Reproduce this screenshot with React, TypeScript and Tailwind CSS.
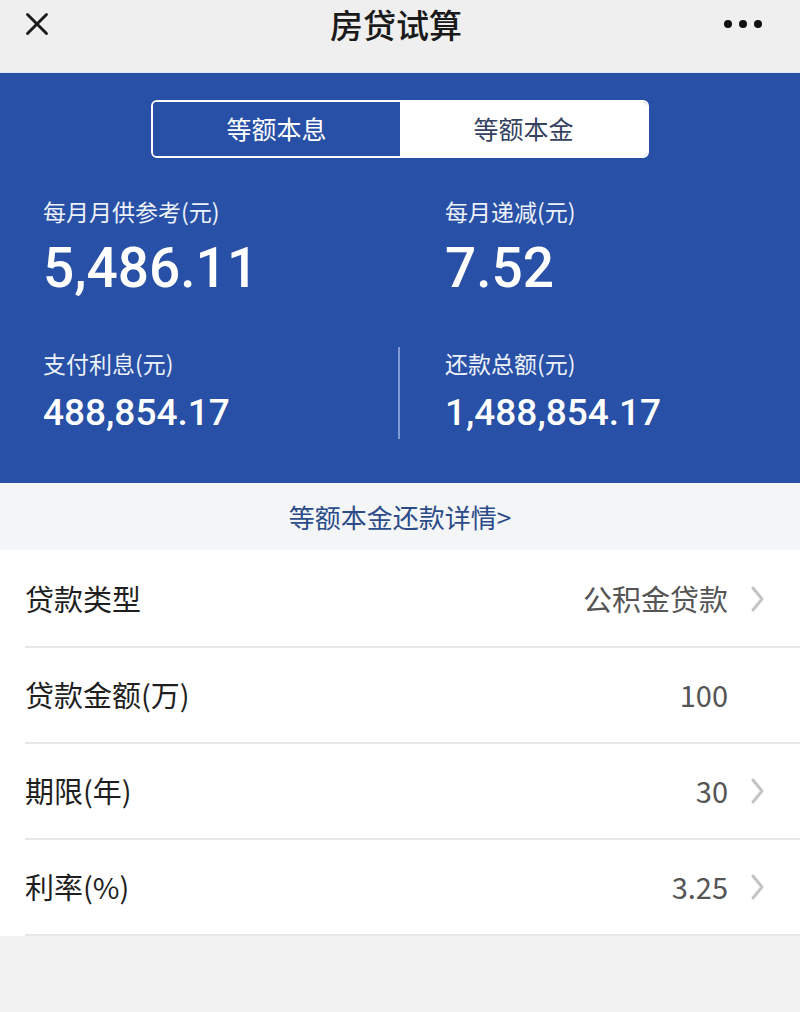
import { X } from "lucide-react";

const cjk = "font-['Noto_Sans_CJK_SC','Noto_Sans',sans-serif]";
const num = "font-['Roboto','Noto_Sans_CJK_SC',sans-serif]";

type Row = { label: string; value: string; arrow: boolean };

const rows: Row[] = [
  { label: "贷款类型", value: "公积金贷款", arrow: true },
  { label: "贷款金额(万)", value: "100", arrow: false },
  { label: "期限(年)", value: "30", arrow: true },
  { label: "利率(%)", value: "3.25", arrow: true },
];

function Chevron({ hidden }: { hidden?: boolean }) {
  return (
    <svg
      width="18"
      height="28"
      viewBox="0 0 18 28"
      className={hidden ? "invisible" : ""}
      fill="none"
      stroke="#c4c4c4"
      strokeWidth="3"
      strokeLinecap="round"
      strokeLinejoin="round"
    >
      <path d="M5 3 L14 14 L5 25" />
    </svg>
  );
}

function Stat({
  label,
  value,
  big,
}: {
  label: string;
  value: string;
  big?: boolean;
}) {
  return (
    <div className="flex flex-col">
      <span className={`${cjk} text-[23px] leading-[30px] text-[#eef2fb]`}>
        {label}
      </span>
      <span
        className={`${num} font-medium text-white ${
          big
            ? "mt-[12px] text-[55px] leading-[60px]"
            : "mt-[12px] text-[37px] leading-[46px]"
        }`}
      >
        {value}
      </span>
    </div>
  );
}

export default function App() {
  return (
    <div className={`${cjk} w-[800px] h-[1012px] bg-[#f2f2f2] flex flex-col`}>
      {/* top bar */}
      <div className="h-[73px] bg-[#efefef] flex items-center justify-between px-[18px] pb-[26px] pt-[2px] border-b border-[#dfe6f3]">
        <X size={38} strokeWidth={1.8} className="text-[#1a1a1a]" />
        <span className="text-[33px] font-medium text-[#1a1a1a] leading-none pl-[12px]">
          房贷试算
        </span>
        <div className="flex gap-[7px] pr-[20px]">
          <span className="w-[8px] h-[8px] rounded-full bg-[#111]" />
          <span className="w-[8px] h-[8px] rounded-full bg-[#111]" />
          <span className="w-[8px] h-[8px] rounded-full bg-[#111]" />
        </div>
      </div>

      {/* result panel */}
      <div className="h-[410px] bg-[#2750a6] flex flex-col">
        <div className="mt-[27px] mx-auto w-[498px] h-[58px] rounded-[6px] border-2 border-white flex overflow-hidden">
          <div className="flex-1 flex items-center justify-center text-[25px] text-white bg-[#2750a6]">
            等额本息
          </div>
          <div className="flex-1 flex items-center justify-center text-[25px] text-[#34425f] bg-white">
            等额本金
          </div>
        </div>

        <div className="grid grid-cols-[355px_1fr] mt-[38px] pl-[43px]">
          <Stat label="每月月供参考(元)" value="5,486.11" big />
          <div className="pl-[47px]">
            <Stat label="每月递减(元)" value="7.52" big />
          </div>
        </div>

        <div className="grid grid-cols-[355px_1fr] mt-[50px] pl-[43px]">
          <Stat label="支付利息(元)" value="488,854.17" />
          <div className="border-l-2 border-[#7f9bd6] pl-[45px] mt-[-1px] pt-[1px] h-[92px]">
            <Stat label="还款总额(元)" value="1,488,854.17" />
          </div>
        </div>
      </div>

      {/* detail link */}
      <div className="h-[67px] bg-[#f4f5f7] flex items-center justify-center">
        <span className="text-[26px] text-[#2b4c88]">等额本金还款详情&gt;</span>
      </div>

      {/* form rows */}
      <div className="bg-white pt-[2px]">
        {rows.map((r) => (
          <div
            key={r.label}
            className="ml-[25px] h-[96px] border-b-2 border-[#e8e8e8] flex items-center justify-between pr-[34px]"
          >
            <span className="text-[29px] text-[#1f1f1f]">{r.label}</span>
            <div className="flex items-center gap-[20px]">
              <span className="text-[29px] text-[#555]">{r.value}</span>
              <Chevron hidden={!r.arrow} />
            </div>
          </div>
        ))}
      </div>
    </div>
  );
}
